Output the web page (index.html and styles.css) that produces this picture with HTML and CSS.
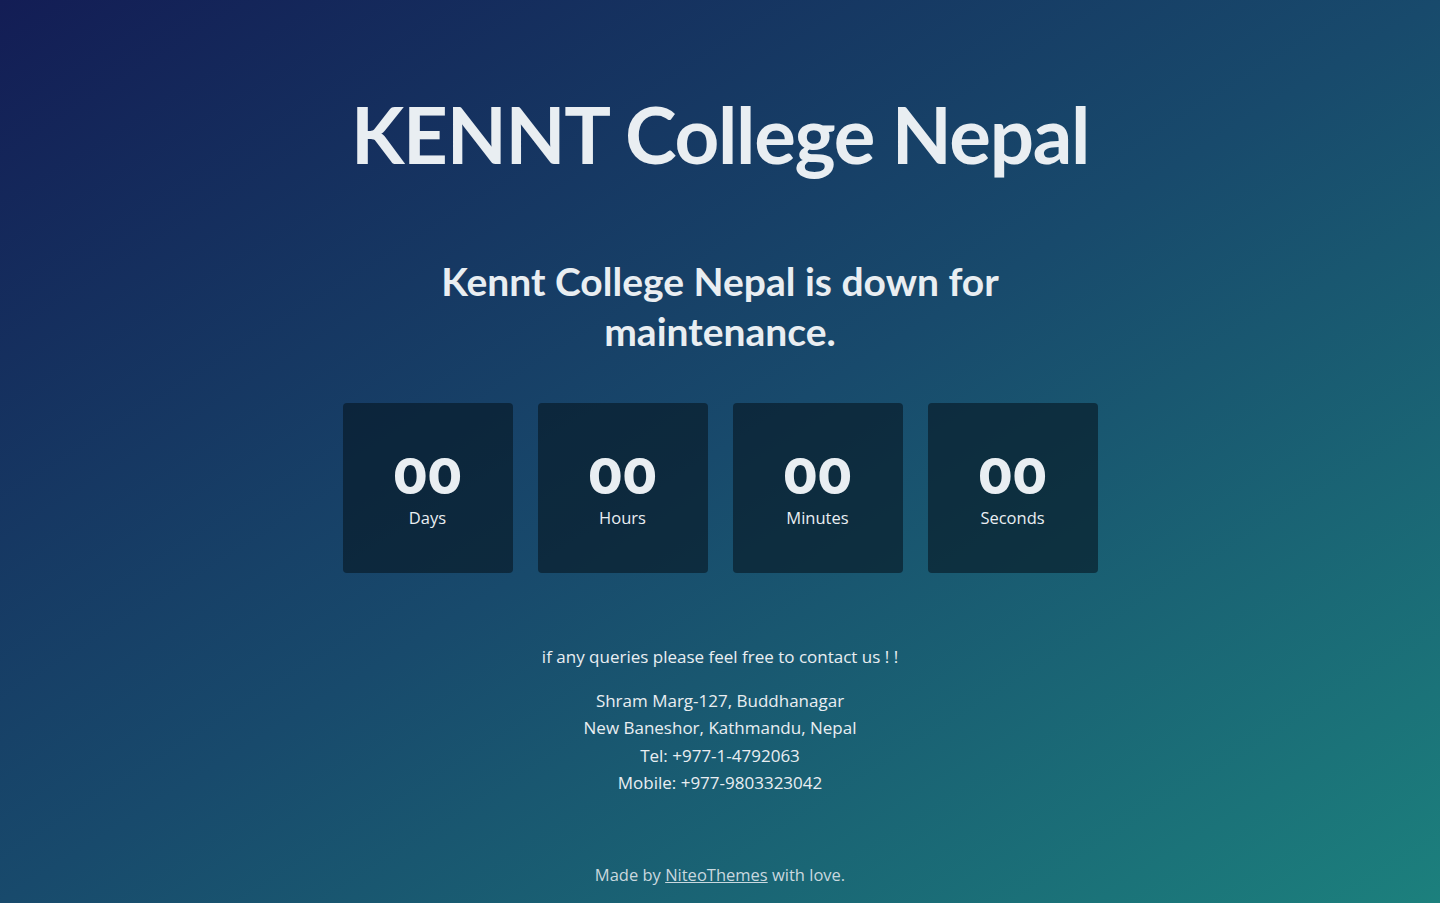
FILE: index.html
```html
<!DOCTYPE html>
<html lang="en">
<head>
<meta charset="utf-8">
<title>KENNT College Nepal</title>
<link rel="stylesheet" href="styles.css">
</head>
<body>
<main class="page">
  <header class="brand">
    <h1 class="brand-title">KENNT College Nepal</h1>
  </header>
  <section class="intro">
    <h2 class="intro-title">Kennt College Nepal is down for maintenance.</h2>
  </section>
  <section class="countdown">
    <div class="cd-box"><span class="cd-num">00</span><span class="cd-label">Days</span></div>
    <div class="cd-box"><span class="cd-num">00</span><span class="cd-label">Hours</span></div>
    <div class="cd-box"><span class="cd-num">00</span><span class="cd-label">Minutes</span></div>
    <div class="cd-box"><span class="cd-num">00</span><span class="cd-label">Seconds</span></div>
  </section>
  <section class="contact">
    <p class="contact-lead">if any queries please feel free to contact us ! !</p>
    <p class="contact-address">Shram Marg-127, Buddhanagar<br>New Baneshor, Kathmandu, Nepal<br>Tel: +977-1-4792063<br>Mobile: +977-9803323042</p>
  </section>
  <footer class="credit">
    <p>Made by <a href="#">NiteoThemes</a> with love.</p>
  </footer>
</main>
</body>
</html>
```
FILE: styles.css
```css
html, body {
  margin: 0;
  padding: 0;
}
body {
  width: 1440px;
  height: 903px;
  overflow: hidden;
  background: linear-gradient(to bottom right, #131d55 0%, #184a6c 50%, #1c807d 100%);
  color: #e9eef2;
  font-family: Lato, "Liberation Sans", sans-serif;
}
.page {
  display: flex;
  flex-direction: column;
  align-items: center;
  height: 903px;
}
.brand-title {
  margin: 84px 0 0;
  font-family: Lato, sans-serif;
  font-weight: 700;
  font-size: 78px;
  line-height: 100px;
  letter-spacing: -1.3px;
}
.intro-title {
  margin: 72px 0 0;
  width: 600px;
  text-align: center;
  font-family: Lato, sans-serif;
  font-weight: 700;
  font-size: 39px;
  line-height: 50px;
}
.countdown {
  display: flex;
  gap: 25px;
  margin-top: 47px;
}
.cd-box {
  box-sizing: border-box;
  width: 170px;
  height: 170px;
  padding-top: 4px;
  border-radius: 4px;
  background: rgba(6, 22, 34, 0.62);
  display: flex;
  flex-direction: column;
  align-items: center;
  justify-content: center;
  gap: 5px;
}
.cd-num {
  font-family: Inter, sans-serif;
  font-weight: 800;
  font-size: 50px;
  line-height: 50px;
}
.cd-label {
  font-family: "Open Sans", sans-serif;
  font-size: 16.5px;
  line-height: 24px;
}
.contact {
  margin-top: 70px;
  text-align: center;
  font-family: "Open Sans", sans-serif;
  font-size: 17px;
}
.contact p { margin: 0; }
.contact-lead {
  line-height: 27px;
}
.contact-address {
  margin-top: 17px !important;
  line-height: 27.3px;
}
.credit {
  margin-top: auto;
  margin-bottom: 16px;
  font-family: "Open Sans", sans-serif;
  font-size: 16.5px;
  color: #c9d8df;
}
.credit p { margin: 0; line-height: 24px; }
.credit a { color: inherit; text-decoration: underline; }
```
